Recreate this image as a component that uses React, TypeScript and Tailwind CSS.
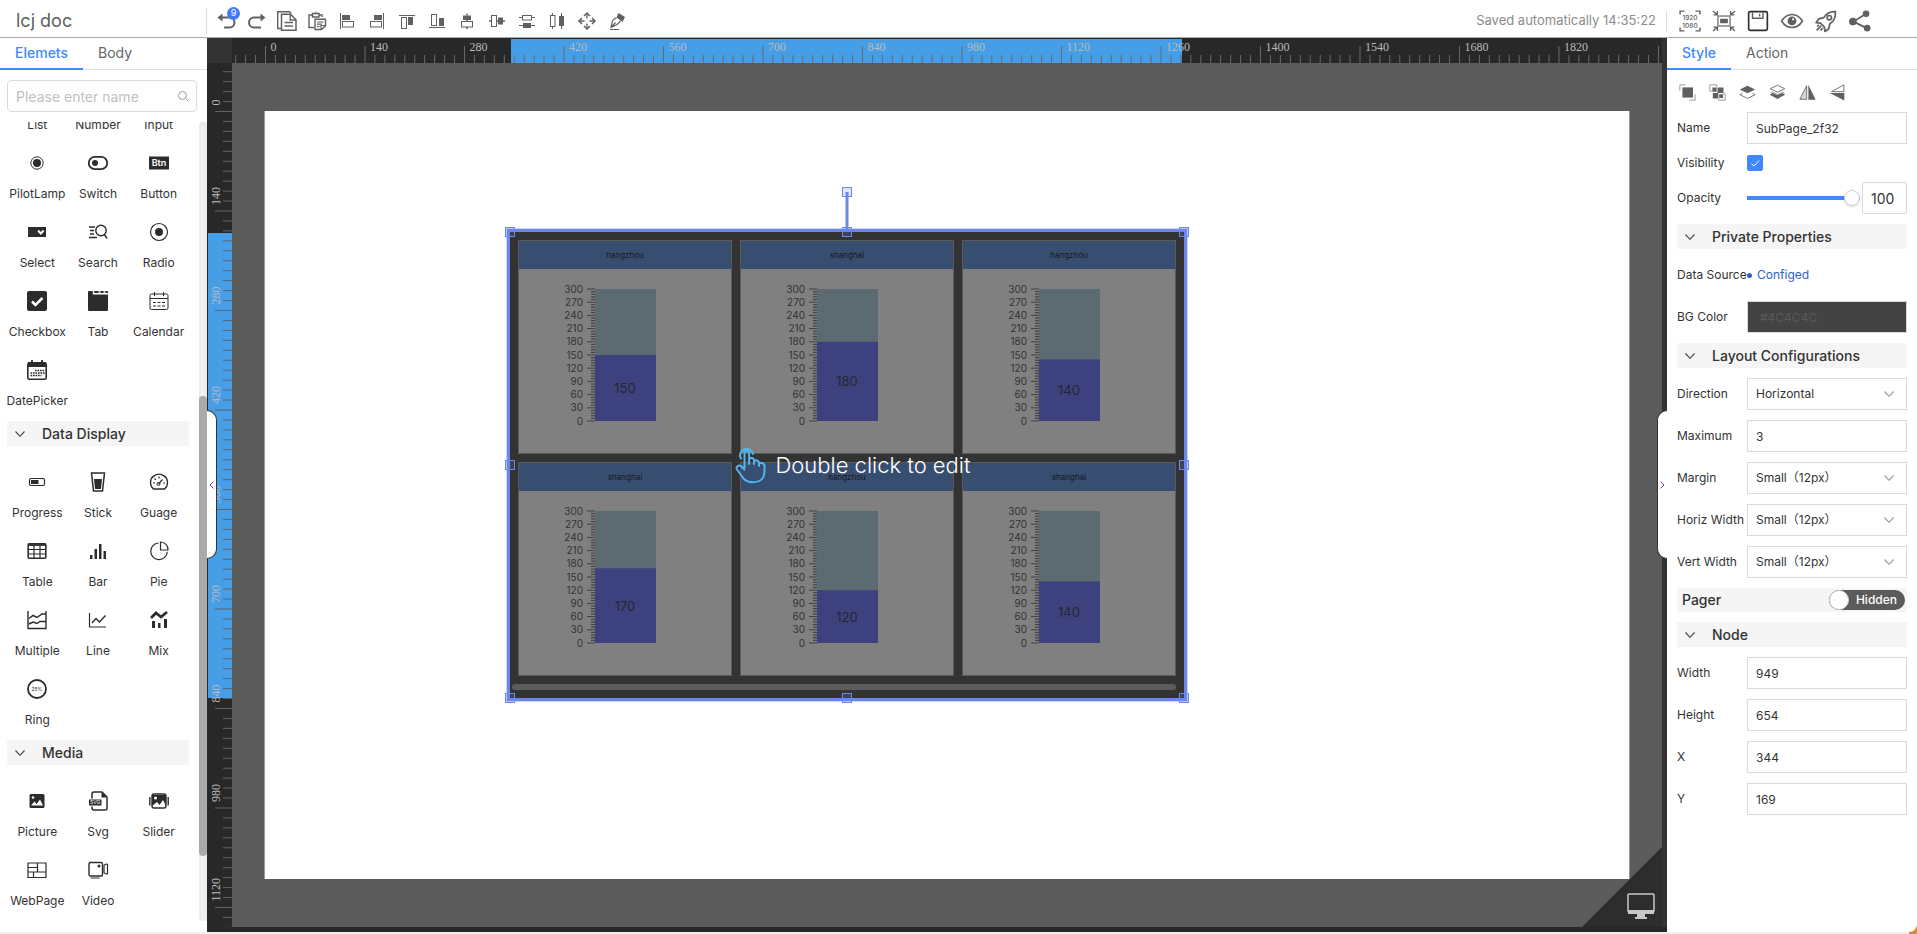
import React, { useState } from "react";

type IconProps = { children: React.ReactNode; className?: string };

// Outline and filled shapes share one 20 unit grid
const Icon: React.FC<IconProps> = ({ children, className = "size-5" }) => (
  <svg
    viewBox="0 0 20 20"
    className={`${className} shrink-0 overflow-visible`}
    fill="none"
    stroke="currentColor"
    aria-hidden="true"
  >
    {children}
  </svg>
);

const solid = { fill: "currentColor", stroke: "none" };

const toolbarItems = [
  {
    name: "Undo",
    badge: 9,
    icon: (
      <>
        <path d="M4 6.5h8.5a5 5 0 0 1 0 10H7" strokeWidth="2" />
        <path d="M5.500 2.500v8L.5 6.500z" {...solid} />
      </>
    ),
  },
  {
    name: "Redo",
    icon: (
      <>
        <path d="M16 6.500H7a5 5 0 0 0 0 10h7" strokeWidth="2" />
        <path d="M13.500 2.500v8l5-4z" {...solid} />
      </>
    ),
  },
  {
    name: "Copy",
    icon: (
      <>
        <path d="M4 17.500H.7V.7h12l1.500 2" strokeWidth="1.400" />
        <path d="M4.500 3.300h9l5.500 5.500v10.500H4.500z" strokeWidth="1.500" />
        <path d="M13.200 3.500v5.500H19M7.500 11.500h8.500M7.500 15h8.500" strokeWidth="1.400" />
      </>
    ),
  },
  {
    name: "Paste",
    icon: (
      <>
        <path d="M7 16.500H2V4h3M12 4h3v2" strokeWidth="1.400" />
        <path d="M5.500 2.500h6.500v3.500H5.500z" strokeWidth="1.400" />
        <path d="M8.500 1.500h.8" strokeWidth="2" />
        <path d="M8 8.200h10.500v6.500l-4 3.800H8z" strokeWidth="1.400" />
        <path d="M10 11h6.500M10 13.200h5M10 15.500h2.500M14 18.500v-4h4.500" strokeWidth="1.200" />
      </>
    ),
  },
  {
    name: "Align left",
    icon: (
      <>
        <path d="M3.500 2v16" strokeWidth="1" />
        <rect x="5" y="4" width="8" height="5" {...solid} />
        <rect x="5.500" y="10.500" width="11" height="5.500" />
      </>
    ),
  },
  {
    name: "Align right",
    icon: (
      <>
        <path d="M16.500 2v16" />
        <rect x="7" y="4" width="8" height="5" {...solid} />
        <rect x="3.500" y="10.500" width="11" height="5.500" />
      </>
    ),
  },
  {
    name: "Align top",
    icon: (
      <>
        <path d="M2 4.500h16" />
        <rect x="4.500" y="6.500" width="5" height="11" />
        <rect x="11" y="6" width="5" height="8" {...solid} />
      </>
    ),
  },
  {
    name: "Align bottom",
    icon: (
      <>
        <path d="M2 16.500h16" />
        <rect x="4.500" y="3.500" width="5" height="11" />
        <rect x="12" y="7" width="5" height="8" {...solid} />
      </>
    ),
  },
  {
    name: "Align center",
    icon: (
      <>
        <path d="M10 2.500v2M10 9v1.500M10 16v2" strokeWidth="1.500" />
        <rect x="6" y="4.500" width="8" height="4.500" {...solid} />
        <rect x="4.500" y="10.500" width="11" height="5.500" />
      </>
    ),
  },
  {
    name: "Align middle",
    icon: (
      <>
        <path d="M2 10h2M9.500 10H11M16 10h2" strokeWidth="1.500" />
        <rect x="4.500" y="4.500" width="5" height="11" />
        <rect x="11" y="6.500" width="5" height="7" {...solid} />
      </>
    ),
  },
  {
    name: "Distribute vertically",
    icon: (
      <>
        <path d="M2 6.500h3M15 6.500h3M2 14.500h16" />
        <rect x="5.500" y="4.500" width="9" height="4.500" />
        <rect x="6" y="12" width="8" height="5" {...solid} />
      </>
    ),
  },
  {
    name: "Distribute horizontally",
    icon: (
      <>
        <path d="M5.500 2v2.500M5.500 15.500V18M14.500 2v16" />
        <rect x="3.500" y="4.500" width="4.500" height="11" />
        <rect x="12" y="5" width="5" height="10" {...solid} />
      </>
    ),
  },
  {
    name: "Move",
    icon: (
      <>
        <path d="M10 3v4.500M10 12.500V17M3 10h4.500M12.500 10H17" strokeWidth="1.300" />
        <path d="M7 5l3-3 3 3M7 15l3 3 3-3M5 7l-3 3 3 3M15 7l3 3-3 3" strokeWidth="1.500" />
      </>
    ),
  },
  {
    name: "Format brush",
    icon: (
      <>
        <path d="M11.500 2l6.500 4-2.500 5-6-4.500z" {...solid} />
        <path d="M9.500 6.500l-4 3-1.500 7 6-3 3.500-3.500M4 16.500l4.500-5M3 18.500h9" strokeWidth="1.200" />
      </>
    ),
  },
];

const actionItems = [
  {
    name: "Original size",
    icon: (
      <>
        <path d="M1 4V1h4M15 1h4v3M1 16v3h4M15 19h4v-3" strokeWidth="1.300" />
        <text x="10" y="9" textAnchor="middle" fontSize="6" fontWeight="500" {...solid}>
          1920
        </text>
        <text x="10" y="16" textAnchor="middle" fontSize="6" fontWeight="500" {...solid}>
          1080
        </text>
      </>
    ),
  },
  {
    name: "Fit size",
    icon: (
      <>
        <rect x="4.500" y="5.500" width="11" height="9" strokeWidth="1.500" strokeOpacity=".7" />
        <rect x="6.500" y="8" width="7" height="4" {...solid} />
        <path
          d="M0 1l4 3.500M20 1l-4 3.500M0 19l4-3.500M20 19l-4-3.500M4 1v3.500H.5M16 1v3.500h3.500M4 19v-3.500H.5M16 19v-3.500h3.500"
          strokeWidth="1.200"
        />
      </>
    ),
  },
  {
    name: "Save",
    icon: (
      <>
        <rect x="1.500" y="1.500" width="17" height="17" rx="1.500" strokeWidth="1.500" className="text-[#2c2c2c]" />
        <path d="M5 2v5.500h9.500V2M11.500 3.500v2.500" strokeWidth="1.300" />
      </>
    ),
  },
  {
    name: "Preview",
    icon: (
      <>
        <path d="M.5 10C3 6 6.200 4 10 4s7 2 9.500 6c-2.500 4-5.700 6-9.500 6S3 14 .5 10z" strokeWidth="1.400" />
        <circle cx="10" cy="10" r="4" {...solid} />
        <circle cx="11" cy="8.500" r="1" fill="#fff" stroke="none" />
      </>
    ),
  },
  {
    name: "Publish",
    icon: (
      <>
        <path
          d="M18.500 1.500c-5-.3-8.300 1.500-10.500 5.500l-4.500 1-2.500 3.500 4 .5 3.500 3.500.5 4 3.500-2.500 1-4.500c4-2.200 5.300-6 5-11z"
          strokeWidth="1.600"
          strokeLinejoin="round"
        />
        <circle cx="13" cy="7" r="2" strokeWidth="1.500" />
        <path d="M5.500 14.500l-4 4M3.500 13.500l-1.500 1.500M7 16.500l-2 2" strokeWidth="1.500" />
      </>
    ),
  },
  {
    name: "Share",
    icon: (
      <>
        <path d="M15.500 3.500L4 10.500l12 6" strokeWidth="1.600" />
        <circle cx="15.500" cy="3.500" r="3" {...solid} />
        <circle cx="3.500" cy="10.500" r="3.500" {...solid} />
        <circle cx="16.500" cy="16.500" r="3" {...solid} />
      </>
    ),
  },
];

type Widget = { name: string; icon: React.ReactNode };

const formWidgets: Widget[] = [
  { name: "List", icon: <path d="M2 4h16M2 10h16M2 16h16" /> },
  { name: "Number", icon: <rect x="1" y="5" width="18" height="10" /> },
  { name: "Input", icon: <path d="M1 5h18v10H1zM5 8v4" /> },
  {
    name: "PilotLamp",
    icon: (
      <>
        <circle cx="10" cy="10" r="6.200" strokeWidth="1" />
        <circle cx="10" cy="10" r="4" {...solid} />
      </>
    ),
  },
  {
    name: "Switch",
    icon: (
      <>
        <rect x=".8" y="3.800" width="18.400" height="12.400" rx="6" strokeWidth="1.800" />
        <circle cx="7" cy="10" r="3" {...solid} />
      </>
    ),
  },
  {
    name: "Button",
    icon: (
      <>
        <rect x="0" y="3.500" width="20" height="13" {...solid} />
        <text x="10" y="13.300" textAnchor="middle" fontSize="9" fontWeight="600" fill="#fff" stroke="none">
          Btn
        </text>
      </>
    ),
  },
  {
    name: "Select",
    icon: (
      <>
        <rect x="1" y="5" width="18" height="10" {...solid} />
        <path d="M11 8.500l2.800 3 2.800-3" stroke="#fff" strokeWidth="2" />
      </>
    ),
  },
  {
    name: "Search",
    icon: (
      <>
        <circle cx="13" cy="8.500" r="5.200" strokeWidth="1.400" />
        <path d="M16.200 12.500l3 4M1 5h6M2 8.500h4M2 12h4M1 15.500h8" strokeWidth="1.400" />
      </>
    ),
  },
  {
    name: "Radio",
    icon: (
      <>
        <circle cx="10" cy="10" r="8.500" strokeWidth="1.200" />
        <circle cx="10" cy="10" r="4" {...solid} />
      </>
    ),
  },
  {
    name: "Checkbox",
    icon: (
      <>
        <rect width="20" height="20" rx="2" {...solid} />
        <path d="M5 10.500l3.500 3.500L15.500 7" stroke="#fff" strokeWidth="2.500" />
      </>
    ),
  },
  {
    name: "Tab",
    icon: (
      <>
        <rect width="20" height="20" rx="1" {...solid} />
        <path d="M5.500 0v2.800H20M10.500 1h2M15.500 1h2" stroke="#fff" strokeWidth="1.400" />
      </>
    ),
  },
  {
    name: "Calendar",
    icon: (
      <>
        <rect x="1" y="3" width="18" height="15.500" rx="1.500" />
        <path d="M1 7.500h18M5.500 1v4M14.500 1v4" />
        <path d="M4 11.500h12M4 15h12" strokeDasharray="3 1.500" strokeWidth="1.200" />
      </>
    ),
  },
  {
    name: "DatePicker",
    icon: (
      <>
        <rect x=".8" y="3" width="18.400" height="16.200" rx="1.500" strokeWidth="1.600" />
        <path d="M1 2h18v5H1z" {...solid} />
        <path d="M5 0v4M15 0v4" strokeWidth="1.800" />
        <path d="M8 10.500h10M3.500 13h14.500M3.500 15.500h11" strokeDasharray="1.700 .8" strokeWidth="1.500" />
      </>
    ),
  },
];

const displayWidgets: Widget[] = [
  {
    name: "Progress",
    icon: (
      <>
        <rect x="2.500" y="6.500" width="15" height="7" rx="1.500" strokeWidth="1.200" />
        <rect x="4" y="8" width="7.500" height="4" {...solid} />
      </>
    ),
  },
  {
    name: "Stick",
    icon: (
      <>
        <path d="M3.500 1h13l-2 18h-9z" strokeWidth="1.500" />
        <path d="M6 7h8l-1 10H7z" {...solid} />
      </>
    ),
  },
  {
    name: "Guage",
    icon: (
      <>
        <path d="M4.500 17C0 13 1 6 5 3.800c3-2 7-2 10 0 4 2.200 5 9.200.5 13.200z" strokeWidth="1.400" />
        <path d="M9.500 12l4-4.500M10 4.500v2M4 11h2M14 11h2M5.500 6.500l1.300 1.300" strokeWidth="1.200" />
        <circle cx="9.500" cy="12" r="1.500" />
      </>
    ),
  },
  {
    name: "Table",
    icon: (
      <>
        <rect x="1.200" y="2.800" width="17.600" height="14.400" rx="1" strokeWidth="1.600" />
        <path d="M1 4h18" strokeWidth="1.800" />
        <path d="M1 8.500h18M1 13h18M7 4v13M13 4v13" strokeWidth="1.200" />
      </>
    ),
  },
  {
    name: "Bar",
    icon: (
      <path d="M2 14h2.500v4H2zM6.500 8H9v10H6.500zM11 3h2.500v15H11zM15.500 10H18v8h-2.500z" {...solid} />
    ),
  },
  {
    name: "Pie",
    icon: (
      <>
        <path d="M9.500 2a8.300 8.300 0 1 0 8.800 8.800" strokeWidth="1.200" />
        <path d="M11.500 1v8H19c.2-4.500-3-8-7.500-8z" strokeWidth="1.200" />
      </>
    ),
  },
  {
    name: "Multiple",
    icon: (
      <>
        <path d="M1 1v17.500h18V1" strokeWidth="1.400" />
        <path d="M2 8.500l4-3 4 2 5-3.500h4M2 14l4-2 4 1.500 3-2h6" strokeWidth="1.500" />
      </>
    ),
  },
  {
    name: "Line",
    icon: (
      <>
        <path d="M1.500 3v14H18" strokeWidth="1.200" />
        <path d="M4 13l4-4.500 3.500 3.500 6-6.500" strokeWidth="1.400" />
      </>
    ),
  },
  {
    name: "Mix",
    icon: (
      <>
        <path d="M2 8l5-5 5 4 6-5" strokeWidth="2.800" />
        <path d="M3 11h3v7H3zM9 13h2.500v5H9zM15 9h3v9h-3z" {...solid} />
      </>
    ),
  },
  {
    name: "Ring",
    icon: (
      <>
        <circle cx="10" cy="10" r="9" strokeWidth="1.800" />
        <text x="10" y="11.800" textAnchor="middle" fontSize="5" {...solid}>
          25%
        </text>
      </>
    ),
  },
];

const mediaWidgets: Widget[] = [
  {
    name: "Picture",
    icon: (
      <>
        <rect x="2.500" y="3" width="15" height="14" rx="1.500" {...solid} />
        <path d="M4 14.500l3.500-4 2 2.500L13 8.500l3 6z" fill="#fff" stroke="none" />
        <circle cx="6" cy="6.500" r="1.300" fill="#fff" stroke="none" />
      </>
    ),
  },
  {
    name: "Svg",
    icon: (
      <>
        <path d="M4 7.500V3a2 2 0 0 1 2-2h8l5 5v11a2 2 0 0 1-2 2H6a2 2 0 0 1-2-2v-1.500" strokeWidth="1.500" />
        <path d="M13.500 1v5.500H19z" {...solid} />
        <rect x="1" y="8.500" width="12.500" height="6" {...solid} />
        <text x="7.200" y="13.300" textAnchor="middle" fontSize="5" fill="#fff" stroke="none">
          SVG
        </text>
      </>
    ),
  },
  {
    name: "Slider",
    icon: (
      <>
        <rect x="3" y="3" width="14" height="14" rx="2" strokeWidth="1.400" />
        <path d="M3 4h14v11l-3-6-3.500 5L8 11l-5 4z" {...solid} />
        <circle cx="6.500" cy="7" r="1.500" fill="#fff" stroke="none" />
        <path d="M.8 6v8.500M19.200 6v8.500" strokeWidth="1.400" />
      </>
    ),
  },
  {
    name: "WebPage",
    icon: (
      <path d="M1 3h18v14.500H1zM1 7.500h9.500M1 12h18M10.500 3v9M6.500 12v5.500" strokeWidth="1.200" />
    ),
  },
  {
    name: "Video",
    icon: (
      <>
        <rect x="1" y="2.500" width="13.500" height="13.500" rx="1.500" strokeWidth="1.400" />
        <circle cx="11" cy="6" r="1.500" {...solid} />
        <path d="M16 5.500c1-1.500 3.500-2 3.500-1v9c0 1-2.500.5-3.500-1zM2.500 18h9" strokeWidth="1.200" />
      </>
    ),
  },
];

const orderItems = [
  {
    name: "Group",
    icon: (
      <>
        <rect x="4" y="4" width="12.500" height="12" {...solid} />
        <path d="M1 8V1h7M12 19h7V12" strokeOpacity=".7" />
      </>
    ),
  },
  {
    name: "Ungroup",
    icon: (
      <>
        <path d="M4 4h5v5H4zM10 4h7v6.500h-7zM4.500 10.500h6.500V17H4.500zM12 12h4.500v4.500H12z" {...solid} />
        <path d="M4 8.500H1V1h8v2.500M11.500 17v2H19v-7.500h-2.500" strokeOpacity=".7" />
      </>
    ),
  },
  {
    name: "Bring forward",
    icon: (
      <>
        <path d="M10 2l9 4.500-9 4.500-9-4.500z" {...solid} />
        <path d="M4 11l-3 1.500 9 4.500 9-4.500-3-1.500" />
      </>
    ),
  },
  {
    name: "Send backward",
    icon: (
      <>
        <path d="M10 1.500l8.500 4-8.500 4-8.500-4z" />
        <path d="M1 10l3-1.500 6 3 6-3 3 1.500-9 3z" fill="currentColor" stroke="none" fillOpacity=".4" />
        <path d="M4 10.500l6 2.500 6-2.500 3 2-9 5-9-5z" {...solid} />
      </>
    ),
  },
  {
    name: "Flip horizontal",
    icon: (
      <>
        <path d="M9 2v16H1z" strokeWidth="1" fill="currentColor" fillOpacity=".25" />
        <path d="M11 1v17.500h8.500z" {...solid} />
      </>
    ),
  },
  {
    name: "Flip vertical",
    icon: (
      <>
        <path d="M17.500 1v8H3z" />
        <path d="M18 10.500v9L1 10.500z" {...solid} />
      </>
    ),
  },
];

const cards = [
  { city: "hangzhou", value: 150 },
  { city: "shanghai", value: 180 },
  { city: "hangzhou", value: 140 },
  { city: "shanghai", value: 170 },
  { city: "hangzhou", value: 120 },
  { city: "shanghai", value: 140 },
];

const Chevron: React.FC<{ className?: string }> = ({ className = "" }) => (
  <svg viewBox="0 0 10 6" className={`w-2.5 shrink-0 ${className}`} fill="none" stroke="currentColor" aria-hidden="true">
    <path d="M.5.500L5 5.300 9.500.500" strokeWidth="1.100" />
  </svg>
);

const SectionHeader: React.FC<{ title: string }> = ({ title }) => (
  <button
    type="button"
    className="flex h-[25px] w-full items-center gap-[17px] bg-[#f5f5f5] pl-2 text-left text-sm font-medium text-[#333]"
  >
    <Chevron className="text-[#444]" />
    {title}
  </button>
);

const Tabs: React.FC<{ items: string[] }> = ({ items }) => {
  const [active, setActive] = useState(items[0]);
  return (
    <div role="tablist" className="flex h-8 shrink-0 border-b border-[#e0e0e0] text-sm">
      {items.map((item) => (
        <button
          key={item}
          type="button"
          role="tab"
          aria-selected={item === active}
          onClick={() => setActive(item)}
          className={`-mb-px h-8 border-b-2 px-[15px] ${
            item === active
              ? "border-[#4088fe] font-medium text-[#4088fe]"
              : "border-transparent text-[#666]"
          }`}
        >
          {item}
        </button>
      ))}
    </div>
  );
};

const WidgetGrid: React.FC<{ items: Widget[] }> = ({ items }) => (
  <div className="grid grid-cols-3">
    {items.map((item) => (
      <button
        key={item.name}
        type="button"
        className="flex h-[69px] flex-col items-center pt-4 text-xs text-[#333]"
      >
        <Icon className="size-5 text-[#2c2c2c]">{item.icon}</Icon>
        <span className="mt-[13px] leading-4">{item.name}</span>
      </button>
    ))}
  </div>
);

const Sidebar: React.FC = () => (
  <aside className="flex w-[207px] shrink-0 flex-col bg-white">
    <Tabs items={["Elemets", "Body"]} />
    <div className="relative mt-2.5 mr-2.5 ml-[7px]">
      <input
        type="text"
        aria-label="Search elements"
        placeholder="Please enter name"
        className="h-8 w-full rounded-sm border border-[#d9d9d9] px-2 text-sm text-[#333] placeholder:text-[#bfbfbf]"
      />
      <svg viewBox="0 0 12 12" className="absolute top-2.5 right-2 size-3 text-[#999]" fill="none" stroke="currentColor" aria-hidden="true">
        <circle cx="5.500" cy="5.500" r="4" />
        <path d="M8.500 8.500l3 3" />
      </svg>
    </div>
    <div className="mt-2.5 mb-[11px] flex min-h-0 flex-1 overflow-hidden">
      <div className="-mt-[54px] min-w-0 flex-1 pr-2.5 pl-[7px]">
        <WidgetGrid items={formWidgets} />
        <div className="mt-2 mb-2.5">
          <SectionHeader title="Data Display" />
        </div>
        <WidgetGrid items={displayWidgets} />
        <div className="mt-2 mb-2.5">
          <SectionHeader title="Media" />
        </div>
        <WidgetGrid items={mediaWidgets} />
      </div>
      <div className="flex w-2 shrink-0 flex-col rounded-full bg-[#f1f1f1] shadow-inner">
        <div className="mt-[274px] h-[460px] rounded-full bg-[#aaa]" />
      </div>
    </div>
  </aside>
);

const STEP = 14;
const ZOOM = 0.7107;
const rulerTicks = Array.from({ length: 145 }, (_, i) => (i - 3) * STEP);

const HorizontalRuler: React.FC = () => (
  <svg className="h-[25px] min-w-0 flex-1 bg-[#282828]" aria-hidden="true">
    <rect x="279" y="1" width="671" height="24" fill="#469ee6" />
    {rulerTicks.map((t) => {
      const x = 33.5 + t * ZOOM;
      const major = t % 140 === 0;
      return (
        <g key={t}>
          <line x1={x} x2={x} y1={major ? 8 : 17} y2={25} stroke="#6a6a6a" />
          {major && (
            <text x={x + 5} y={13} fontSize="12" fontFamily="Liberation Serif, serif" fill="#bbb">
              {t}
            </text>
          )}
        </g>
      );
    })}
  </svg>
);

const VerticalRuler: React.FC = () => (
  <svg className="w-[25px] shrink-0 bg-[#282828]" aria-hidden="true">
    <rect x="1" y="170" width="24" height="465" fill="#469ee6" />
    {rulerTicks
      .map((t) => t - STEP)
      .map((t) => {
        const y = 48.5 + t * ZOOM;
        const major = t % 140 === 0;
        return (
          <g key={t}>
            <line x1={major ? 8 : 16} x2={25} y1={y} y2={y} stroke="#5f6468" />
            {major && (
              <text
                transform={`translate(13 ${y - 6}) rotate(-90)`}
                fontSize="12"
                fontFamily="Liberation Serif, serif"
                fill="#bbb"
              >
                {t}
              </text>
            )}
          </g>
        );
      })}
  </svg>
);

const BarGauge: React.FC<{ value: number }> = ({ value }) => {
  const top = 20;
  const height = 132;
  const y = top + height * (1 - value / 300);
  return (
    <svg viewBox="0 0 212 184" className="w-full" aria-hidden="true">
      <rect x="76" y={top} width="61" height={height} fill="#5c6a72" />
      <rect x="76" y={y} width="61" height={top + height - y} fill="#3d427f" />
      {Array.from({ length: 51 }, (_, i) => {
        const ty = top + (height * i) / 50;
        const major = i % 5 === 0;
        return (
          <line key={i} x1={major ? 68 : 72} x2="76" y1={ty} y2={ty} stroke="#404040" strokeWidth={major ? 1 : 1.2} />
        );
      })}
      {Array.from({ length: 11 }, (_, i) => (
        <text key={i} x="64" y={top + 3.5 + (height * i) / 10} textAnchor="end" fontSize="10" fill="#333">
          {300 - i * 30}
        </text>
      ))}
      <text x="106" y={(y + top + height) / 2 + 5} textAnchor="middle" fontSize="13" fill="#26262e">
        {value}
      </text>
    </svg>
  );
};

const handles = [
  "left-0 top-0",
  "left-1/2 top-0",
  "left-full top-0",
  "left-0 top-1/2",
  "left-full top-1/2",
  "left-0 top-full",
  "left-1/2 top-full",
  "left-full top-full",
  "left-1/2 -top-10",
];

// Nodes keep their place on the page, so they are positioned absolutely
const SubPage: React.FC = () => (
  <div className="absolute top-[121px] left-[245px] h-[466px] w-[674px] bg-[#333]">
    <div className="grid grid-cols-3 gap-2 p-2">
      {cards.map((card, i) => (
        <div key={i} className="border border-[#5a5a5a] bg-[#808080]">
          <div className="flex h-7 items-center justify-center bg-[#384e70] text-[8px] text-[#15181f]">
            {card.city}
          </div>
          <BarGauge value={card.value} />
        </div>
      ))}
    </div>
    <div className="mr-2 ml-0.5 h-1.5 rounded-full bg-[#5c5c5c]" />
    <div className="absolute inset-0 flex items-center justify-center gap-2 pl-3 text-[22px] font-light text-white">
      <svg viewBox="0 0 32 38" className="w-8" fill="none" stroke="#52b4f0" strokeWidth="2" strokeLinejoin="round" strokeLinecap="round" aria-hidden="true">
        <path d="M6 12.500A6.500 6.500 0 1 1 18 8M9.500 22V7a2.300 2.300 0 0 1 4.600 0v9.500M14.100 18v-5c2-2 4.500-1 4.900 1v4M19 15c2-1.500 4.500-.5 5 1.500V20M24 17.500c2.500-1.500 5.500 0 5.500 2.500 0 5 .5 9-2 12.500C24.500 36.500 14 38 9 33c-2.500-3-5-7-7-9.500-1.500-2.500 1.500-5 4-3.500L9.500 23.500" />
      </svg>
      Double click to edit
    </div>
    <div className="absolute -inset-[3px] border-[3px] border-[#6b87ec] shadow-[0_0_0_1px_#cdd6f8]" />
    <div className="absolute -top-10 left-1/2 h-10 w-[3px] -translate-x-1/2 bg-[#6b87ec]" />
    {handles.map((position) => (
      <span
        key={position}
        className={`absolute size-2.5 -translate-1/2 border border-[#6b87ec] bg-[#6b87ec]/20 ${position}`}
      />
    ))}
  </div>
);

const Canvas: React.FC = () => (
  <main className="relative flex min-w-0 flex-1 flex-col bg-[#282828] pb-[5px]">
    <div className="flex">
      <div className="size-[25px] bg-[#333]" />
      <HorizontalRuler />
      <div className="w-[5px] bg-[#333]" />
    </div>
    <div className="flex min-h-0 flex-1">
      <VerticalRuler />
      <div className="relative min-w-0 flex-1 bg-[#5b5b5b] px-8 pt-12 pb-12">
        <div className="relative h-full border-x border-[#999] bg-white">
          <SubPage />
        </div>
        <svg viewBox="0 0 80 80" className="absolute right-0 bottom-0 size-20" aria-hidden="true">
          <path d="M80 0v80H0z" fill="#2d2d2d" />
          <rect x="46" y="47" width="26" height="18" rx="1" fill="none" stroke="#c8c8c8" strokeWidth="1.500" />
          <path d="M46 63h26v4H46zM55 67h8v3h2v2H53v-2h2z" fill="#c8c8c8" />
        </svg>
      </div>
      <div className="w-[5px] bg-[#333]" />
    </div>
    <button
      type="button"
      aria-label="Collapse elements"
      className="absolute top-[372px] left-0 flex h-[149px] w-2.5 items-center justify-center rounded-r-[10px] border border-l-0 border-[#333] bg-white text-[#7040a8]"
    >
      <svg viewBox="0 0 5 8" className="w-[5px]" fill="none" stroke="currentColor" aria-hidden="true">
        <path d="M4.500.500L1 4l3.500 3.500" />
      </svg>
    </button>
    <button
      type="button"
      aria-label="Collapse properties"
      className="absolute top-[372px] right-0 flex h-[149px] w-2.5 items-center justify-center rounded-l-[10px] border border-r-0 border-[#333] bg-white text-[#7040a8]"
    >
      <svg viewBox="0 0 5 8" className="w-[5px]" fill="none" stroke="currentColor" aria-hidden="true">
        <path d="M.5.500L4 4 .5 7.500" />
      </svg>
    </button>
  </main>
);

type FieldProps = { label: string; value: string; fieldClass?: string };

const TextField: React.FC<FieldProps> = ({
  label,
  value,
  fieldClass = "bg-white px-2 text-[#333]",
}) => (
  <label className="flex h-8 items-center">
    <span className="w-[70px] shrink-0 whitespace-nowrap">{label}</span>
    <input
      type="text"
      defaultValue={value}
      className={`h-8 min-w-0 flex-1 border border-[#d9d9d9] ${fieldClass}`}
    />
  </label>
);

const SelectField: React.FC<FieldProps> = ({ label, value }) => (
  <label className="relative flex h-8 items-center">
    <span className="w-[70px] shrink-0 whitespace-nowrap">{label}</span>
    <select className="h-8 min-w-0 flex-1 appearance-none border border-[#d9d9d9] bg-white px-2 text-[#333]">
      <option>{value}</option>
    </select>
    <Chevron className="pointer-events-none absolute right-[13px] text-[#999]" />
  </label>
);

const PropertiesPanel: React.FC = () => {
  const [visible, setVisible] = useState(true);
  const [opacity, setOpacity] = useState(100);
  const [pager, setPager] = useState(false);

  return (
    <aside className="flex w-[250px] shrink-0 flex-col rounded-br-lg bg-white text-xs text-[#333]">
      <Tabs items={["Style", "Action"]} />
      <div className="flex flex-col gap-2.5 px-2.5 pt-3">
        <div className="flex h-5 text-[#606060]">
          {orderItems.map((item) => (
            <button key={item.name} type="button" aria-label={item.name} className="flex w-[30px] items-center pl-0.5">
              <Icon className="size-[17px]">{item.icon}</Icon>
            </button>
          ))}
        </div>
        <TextField label="Name" value="SubPage_2f32" />
        <label className="relative flex h-[18px] items-center">
          <span className="w-[70px] shrink-0">Visibility</span>
          <input
            type="checkbox"
            checked={visible}
            onChange={(e) => setVisible(e.target.checked)}
            className="size-4 appearance-none rounded-xs border border-[#d9d9d9] checked:border-[#4088fe] checked:bg-[#4088fe]"
          />
          {visible && (
            <svg viewBox="0 0 16 16" className="pointer-events-none absolute left-[70px] size-4" fill="none" stroke="#fff" aria-hidden="true">
              <path d="M4.500 8.500l2.500 2.500 5-5.500" />
            </svg>
          )}
        </label>
        <div className="flex h-8 items-center">
          <label htmlFor="opacity" className="w-[70px] shrink-0">
            Opacity
          </label>
          <input
            id="opacity"
            type="range"
            value={opacity}
            onChange={(e) => setOpacity(Number(e.target.value))}
            className="h-1 w-[113px] appearance-none bg-[#4088fe] [&::-webkit-slider-thumb]:size-4 [&::-webkit-slider-thumb]:appearance-none [&::-webkit-slider-thumb]:rounded-full [&::-webkit-slider-thumb]:border [&::-webkit-slider-thumb]:border-[#d0d0d0] [&::-webkit-slider-thumb]:bg-white [&::-webkit-slider-thumb]:shadow-sm"
          />
          <input
            type="text"
            aria-label="Opacity value"
            value={opacity}
            onChange={(e) => setOpacity(Number(e.target.value) || 0)}
            className="ml-0.5 h-8 min-w-0 flex-1 rounded-xs border border-[#d9d9d9] px-2 text-sm"
          />
        </div>
        <SectionHeader title="Private Properties" />
        <div className="flex h-8 items-center">
          <span className="w-[70px] shrink-0 whitespace-nowrap">Data Source</span>
          <span className="size-[5px] rounded-full bg-[#2f60d0]" />
          <a href="#data-source" className="ml-[5px] text-[#2f60d0]">
            Configed
          </a>
        </div>
        <TextField label="BG Color" value="#4C4C4C" fieldClass="bg-[#434343] px-3 text-[#5a5a5a]" />
        <SectionHeader title="Layout Configurations" />
        <SelectField label="Direction" value="Horizontal" />
        <TextField label="Maximum" value="3" />
        <SelectField label="Margin" value="Small（12px）" />
        <SelectField label="Horiz Width" value="Small（12px）" />
        <SelectField label="Vert Width" value="Small（12px）" />
        <div className="flex h-6 items-center justify-between bg-[#f5f5f5] pr-0.5 pl-[5px]">
          <span className="text-sm font-medium">Pager</span>
          <button
            type="button"
            role="switch"
            aria-checked={pager}
            onClick={() => setPager(!pager)}
            className="flex h-5 w-[76px] items-center justify-between rounded-full bg-[#5b5b5b] pr-2 font-medium text-white"
          >
            <span className="size-5 rounded-full border border-[#ccc] bg-white" />
            {pager ? "Shown" : "Hidden"}
          </button>
        </div>
        <SectionHeader title="Node" />
        <TextField label="Width" value="949" />
        <TextField label="Height" value="654" />
        <TextField label="X" value="344" />
        <TextField label="Y" value="169" />
      </div>
    </aside>
  );
};

const Header: React.FC = () => (
  <header className="flex h-[38px] shrink-0 items-center border-b border-[#aaa] bg-white pt-1 text-[#606060]">
    <h1 className="w-[206px] shrink-0 pl-4 text-lg">lcj doc</h1>
    <div className="h-[26px] w-px bg-[#ddd]" />
    <div className="flex pl-[5px]">
      {toolbarItems.map((item) => (
        <button
          key={item.name}
          type="button"
          aria-label={item.name}
          className="relative flex h-8 w-[30px] items-center justify-center"
        >
          <Icon>{item.icon}</Icon>
          {item.badge && (
            <span className="absolute top-0.5 right-0.5 flex size-[13px] items-center justify-center rounded-full bg-[#407bf5] text-[9px] text-white">
              {item.badge}
            </span>
          )}
        </button>
      ))}
    </div>
    <span className="ml-auto pr-2.5 text-[13px] text-[#8c8c8c]">Saved automatically 14:35:22</span>
    <div className="h-5 w-px bg-[#ddd]" />
    <div className="flex w-[250px] pl-1.5">
      {actionItems.map((item) => (
        <button
          key={item.name}
          type="button"
          aria-label={item.name}
          className="flex h-8 w-[34px] items-center justify-center"
        >
          <Icon className="size-[22px]">{item.icon}</Icon>
        </button>
      ))}
    </div>
  </header>
);

const App: React.FC = () => (
  <div className="relative flex h-screen flex-col overflow-hidden bg-[#f0f0f0] pb-0.5 font-['Inter','Noto_Sans_CJK_SC',sans-serif]">
    <div className="absolute right-0 bottom-0 size-2 bg-[#d8893a]" />
    <Header />
    <div className="relative flex min-h-0 flex-1">
      <Sidebar />
      <Canvas />
      <PropertiesPanel />
    </div>
  </div>
);

export default App;
